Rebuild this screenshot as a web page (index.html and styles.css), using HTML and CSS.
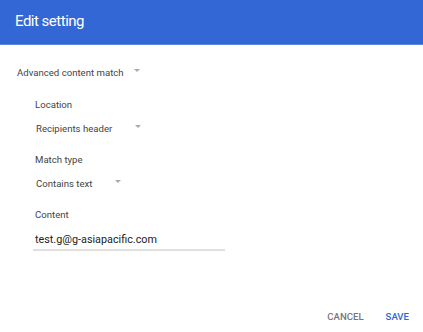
FILE: index.html
```html
<!DOCTYPE html>
<html>
<head>
<meta charset="utf-8">
<link rel="stylesheet" href="styles.css">
</head>
<body>
<div class="dialog">
  <header class="header">Edit setting</header>
  <div class="content">
    <div class="select top-select">
      <span class="select-text">Advanced content match</span>
      <span class="arrow"></span>
    </div>
    <div class="fields">
      <div class="field">
        <div class="label">Location</div>
        <div class="select select-loc">
          <span class="select-text">Recipients header</span>
          <span class="arrow"></span>
        </div>
      </div>
      <div class="field">
        <div class="label">Match type</div>
        <div class="select select-match">
          <span class="select-text">Contains text</span>
          <span class="arrow"></span>
        </div>
      </div>
      <div class="field">
        <div class="label">Content</div>
        <div class="input">test.g@g-asiapacific.com</div>
      </div>
    </div>
  </div>
  <footer class="actions">
    <span class="btn cancel">CANCEL</span>
    <span class="btn save">SAVE</span>
  </footer>
</div>
</body>
</html>
```
FILE: styles.css
```css
html, body {
  margin: 0;
  padding: 0;
  background: #fff;
}
body {
  font-family: Roboto, "Liberation Sans", sans-serif;
  width: 423px;
  height: 332px;
  overflow: hidden;
}
.dialog {
  display: flex;
  flex-direction: column;
  height: 332px;
}
.header {
  background: #3367d6;
  color: #fff;
  height: 44px;
  border-bottom: 1px solid #5a86e2;
  font-size: 15px;
  letter-spacing: -0.5px;
  padding-left: 15px;
  line-height: 42px;
}
.content {
  flex: 1;
  padding: 20px 0 0 17px;
}
.select {
  display: flex;
  align-items: center;
  color: #444;
  font-size: 9.6px;
  height: 14px;
}
.arrow {
  width: 0;
  height: 0;
  border-left: 3.5px solid transparent;
  border-right: 3.5px solid transparent;
  border-top: 3.5px solid #aaa;
  margin-top: -3px;
}
.top-select .arrow { margin-left: 10px; }
.select-loc .arrow { margin-left: 23px; }
.select-match .arrow { margin-left: 23px; }
.fields {
  padding-left: 18px;
  padding-top: 19px;
  display: flex;
  flex-direction: column;
  gap: 18px;
}
.field .label {
  color: #444;
  font-size: 9.6px;
  height: 14px;
  line-height: 14px;
  margin-bottom: 9px;
}
.field .select {
  padding-left: 1px;
}
.input {
  width: 190px;
  margin-left: -2px;
  padding-left: 2px;
  font-size: 10.8px;
  color: #222;
  height: 18px;
  line-height: 18px;
  border-bottom: 2px solid #e0e0e0;
  margin-top: 3px;
}
.actions {
  display: flex;
  justify-content: flex-end;
  gap: 22px;
  padding: 0 14px 6px 0;
  height: 20px;
  align-items: center;
}
.btn {
  font-size: 9.6px;
  font-weight: 500;
}
.cancel { color: #777; }
.save { color: #3367d6; }
```
